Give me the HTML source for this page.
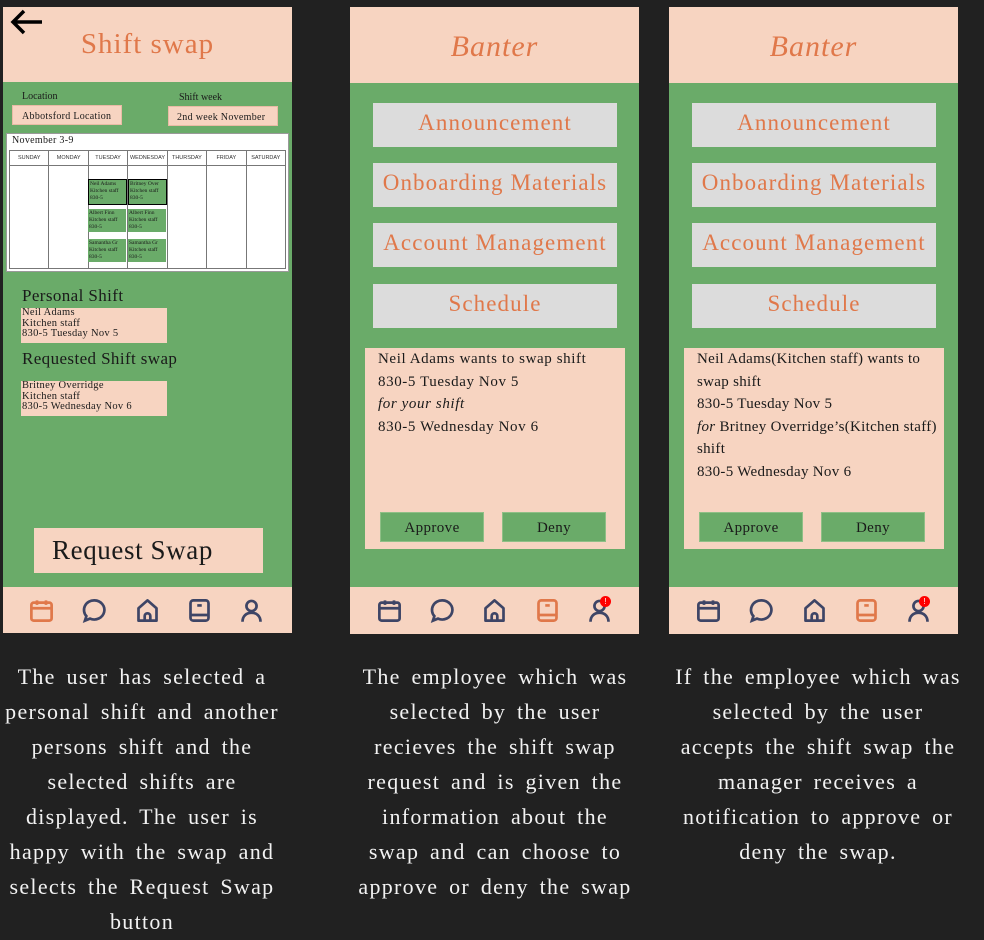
<!DOCTYPE html>
<html><head><meta charset="utf-8"><style>
*{margin:0;padding:0;box-sizing:border-box}
body{width:984px;height:940px;background:#212121;position:relative;overflow:hidden;font-family:"Liberation Serif","DejaVu Serif",serif;color:#1a1a1a}
.a{position:absolute}
.peach{background:#f7d4c1}
.green{background:#6aab69}
.or{color:#e0784a}
.gray{background:#dcdcdc;color:#e0784a;font-size:23px;text-align:center;line-height:40px;letter-spacing:1.1px;white-space:nowrap}
.cap{color:#f2f2f2;font-size:22px;text-align:center;line-height:35px;letter-spacing:1.3px;word-spacing:4px;white-space:nowrap}
.btn{background:#6aab69;border:1px solid #8fbf86;text-align:center;font-size:15px;line-height:30px;letter-spacing:.4px}
.ic{position:absolute;top:597px;width:27px;height:27px}
.box{font-size:15px;line-height:22.5px;letter-spacing:.6px;white-space:nowrap}
table{border-collapse:collapse;table-layout:fixed}
td{border:1px solid #777}
.sh{position:absolute;background:#6aab69;font-size:5.5px;line-height:7px;padding:1px}
</style></head><body>

<!-- LEFT -->
<div class="a peach" style="left:3px;top:7px;width:289px;height:75px"></div>
<svg class="a" style="left:8px;top:8px" width="38" height="30" viewBox="0 0 38 30"><path d="M34 14H5M16 3L5 14l11 11" stroke="#000" stroke-width="3.5" fill="none"/></svg>
<div class="a or" style="left:3px;top:28px;width:289px;text-align:center;font-size:29px;letter-spacing:1px">Shift swap</div>
<div class="a green" style="left:3px;top:82px;width:289px;height:505px"></div>
<div class="a" style="left:22px;top:91px;font-size:10px">Location</div>
<div class="a peach" style="left:12px;top:105px;width:110px;height:20px;font-size:10px;line-height:21px;padding-left:9px;border:1px solid #e9bba5;letter-spacing:.3px">Abbotsford Location</div>
<div class="a" style="left:179px;top:92px;font-size:10px">Shift week</div>
<div class="a peach" style="left:168px;top:106px;width:110px;height:20px;font-size:10px;line-height:21px;padding-left:8px;border:1px solid #e9bba5;letter-spacing:.3px">2nd week November</div>
<div class="a" style="left:6px;top:133px;width:283px;height:139px;background:#fff;border:1px solid #999"></div>
<div class="a" style="left:12px;top:135px;font-size:10px;letter-spacing:.3px">November 3-9</div>
<table class="a" style="left:9px;top:150px;width:277px;height:119px;font-family:'Liberation Sans',sans-serif;font-size:5.5px;color:#333">
<tr style="height:15px;text-align:center"><td>SUNDAY</td><td>MONDAY</td><td>TUESDAY</td><td>WEDNESDAY</td><td>THURSDAY</td><td>FRIDAY</td><td>SATURDAY</td></tr>
<tr><td></td><td></td><td></td><td></td><td></td><td></td><td></td></tr></table>
<div class="sh" style="left:88px;top:179px;width:39px;height:26px;border:1.5px solid #000">Neil Adams<br>Kitchen staff<br>830-5</div>
<div class="sh" style="left:128px;top:179px;width:39px;height:26px;border:1.5px solid #000">Britney Over<br>Kitchen staff<br>830-5</div>
<div class="sh" style="left:88px;top:209px;width:38px;height:23px">Albert Finn<br>Kitchen staff<br>830-5</div>
<div class="sh" style="left:128px;top:209px;width:38px;height:23px">Albert Finn<br>Kitchen staff<br>830-5</div>
<div class="sh" style="left:88px;top:239px;width:38px;height:23px">Samantha Gr<br>Kitchen staff<br>830-5</div>
<div class="sh" style="left:128px;top:239px;width:38px;height:23px">Samantha Gr<br>Kitchen staff<br>830-5</div>
<div class="a" style="left:22px;top:286px;font-size:17px;letter-spacing:.4px">Personal Shift</div>
<div class="a peach" style="left:21px;top:308px;width:146px;height:35px;font-size:10.5px;line-height:10.5px;padding-left:1px;letter-spacing:.3px">Neil Adams<br>Kitchen staff<br>830-5 Tuesday Nov 5</div>
<div class="a" style="left:22px;top:349px;font-size:17px;letter-spacing:.4px">Requested Shift swap</div>
<div class="a peach" style="left:21px;top:381px;width:146px;height:35px;font-size:10.5px;line-height:10.5px;padding-left:1px;letter-spacing:.3px">Britney Overridge<br>Kitchen staff<br>830-5 Wednesday Nov 6</div>
<div class="a peach" style="left:34px;top:528px;width:229px;height:45px;font-size:27px;line-height:45px;padding-left:18px;letter-spacing:.6px">Request Swap</div>
<div class="a peach" style="left:3px;top:587px;width:289px;height:46px"></div>

<!-- MIDDLE -->
<div class="a peach" style="left:350px;top:7px;width:289px;height:76px"></div>
<div class="a or" style="left:350px;top:30px;width:289px;text-align:center;font-size:30px;font-style:italic;letter-spacing:1px">Banter</div>
<div class="a green" style="left:350px;top:83px;width:289px;height:504px"></div>
<div class="a gray" style="left:373px;top:103px;width:244px;height:44px">Announcement</div>
<div class="a gray" style="left:373px;top:163px;width:244px;height:44px">Onboarding Materials</div>
<div class="a gray" style="left:373px;top:223px;width:244px;height:44px">Account Management</div>
<div class="a gray" style="left:373px;top:284px;width:244px;height:44px">Schedule</div>
<div class="a peach box" style="left:365px;top:348px;width:260px;height:201px;padding:0 0 0 13px">Neil Adams wants to swap shift<br>830-5 Tuesday Nov 5<br><i>for your shift</i><br>830-5 Wednesday Nov 6</div>
<div class="a btn" style="left:380px;top:512px;width:104px;height:30px">Approve</div>
<div class="a btn" style="left:502px;top:512px;width:104px;height:30px">Deny</div>
<div class="a peach" style="left:350px;top:587px;width:289px;height:47px"></div>

<!-- RIGHT -->
<div class="a peach" style="left:669px;top:7px;width:289px;height:76px"></div>
<div class="a or" style="left:669px;top:30px;width:289px;text-align:center;font-size:30px;font-style:italic;letter-spacing:1px">Banter</div>
<div class="a green" style="left:669px;top:83px;width:289px;height:504px"></div>
<div class="a gray" style="left:692px;top:103px;width:244px;height:44px">Announcement</div>
<div class="a gray" style="left:692px;top:163px;width:244px;height:44px">Onboarding Materials</div>
<div class="a gray" style="left:692px;top:223px;width:244px;height:44px">Account Management</div>
<div class="a gray" style="left:692px;top:284px;width:244px;height:44px">Schedule</div>
<div class="a peach box" style="left:684px;top:348px;width:260px;height:201px;padding:0 0 0 13px;letter-spacing:.3px">Neil Adams(Kitchen staff) wants to<br>swap shift<br>830-5 Tuesday Nov 5<br><i>for</i> Britney Overridge’s(Kitchen staff)<br>shift<br>830-5 Wednesday Nov 6</div>
<div class="a btn" style="left:699px;top:512px;width:104px;height:30px">Approve</div>
<div class="a btn" style="left:821px;top:512px;width:104px;height:30px">Deny</div>
<div class="a peach" style="left:669px;top:587px;width:289px;height:47px"></div>

<!-- icons -->
<svg width="0" height="0" style="position:absolute"><defs>
<g id="cal" fill="none" stroke-width="2.4"><rect x="3" y="5" width="18" height="16" rx="2"/><path d="M3 10h18M8 3v4M16 3v4"/><g stroke="none"><circle cx="8" cy="14" r="1.1"/><circle cx="12" cy="14" r="1.1"/><circle cx="16" cy="14" r="1.1"/><circle cx="8" cy="18" r="1.1"/><circle cx="12" cy="18" r="1.1"/><circle cx="16" cy="18" r="1.1"/></g></g>
<g id="chat" fill="none" stroke-width="2.4"><path d="M12 3a9 8.5 0 1 1-4 16.2L3.5 21l1.3-4A9 8.5 0 0 1 12 3z"/><g stroke="none"><circle cx="8" cy="11.5" r="1.1"/><circle cx="12" cy="11.5" r="1.1"/><circle cx="16" cy="11.5" r="1.1"/></g></g>
<g id="home" fill="none" stroke-width="2.4" stroke-linejoin="round"><path d="M4 21V10l8-7 8 7v11z"/><path d="M9.5 21v-4a2.5 2.5 0 0 1 5 0v4"/></g>
<g id="book" fill="none" stroke-width="2.4"><rect x="4" y="3" width="16" height="18" rx="2.5"/><path d="M4 16h16M10 7.5h4"/></g>
<g id="user" fill="none" stroke-width="2.4"><circle cx="12" cy="8" r="4.5"/><path d="M4 22c0-5 3.5-8 8-8s8 3 8 8"/></g>
</defs></svg>
<svg class="ic" style="left:28px" viewBox="0 0 24 24" stroke="#e0784a" fill="#e0784a"><use href="#cal"/></svg>
<svg class="ic" style="left:81px" viewBox="0 0 24 24" stroke="#3e4566" fill="#3e4566"><use href="#chat"/></svg>
<svg class="ic" style="left:134px" viewBox="0 0 24 24" stroke="#3e4566"><use href="#home"/></svg>
<svg class="ic" style="left:186px" viewBox="0 0 24 24" stroke="#3e4566"><use href="#book"/></svg>
<svg class="ic" style="left:238px" viewBox="0 0 24 24" stroke="#3e4566"><use href="#user"/></svg>

<svg class="ic" style="left:376px" viewBox="0 0 24 24" stroke="#3e4566" fill="#3e4566"><use href="#cal"/></svg>
<svg class="ic" style="left:429px" viewBox="0 0 24 24" stroke="#3e4566" fill="#3e4566"><use href="#chat"/></svg>
<svg class="ic" style="left:481px" viewBox="0 0 24 24" stroke="#3e4566"><use href="#home"/></svg>
<svg class="ic" style="left:534px" viewBox="0 0 24 24" stroke="#e0784a"><use href="#book"/></svg>
<svg class="ic" style="left:586px" viewBox="0 0 24 24" stroke="#3e4566"><use href="#user"/></svg>
<div class="a" style="left:600px;top:596px;width:11px;height:11px;border-radius:50%;background:#f00;color:#fff;font-size:8px;line-height:11px;text-align:center;font-family:'Liberation Sans'">!</div>

<svg class="ic" style="left:695px" viewBox="0 0 24 24" stroke="#3e4566" fill="#3e4566"><use href="#cal"/></svg>
<svg class="ic" style="left:748px" viewBox="0 0 24 24" stroke="#3e4566" fill="#3e4566"><use href="#chat"/></svg>
<svg class="ic" style="left:801px" viewBox="0 0 24 24" stroke="#3e4566"><use href="#home"/></svg>
<svg class="ic" style="left:853px" viewBox="0 0 24 24" stroke="#e0784a"><use href="#book"/></svg>
<svg class="ic" style="left:905px" viewBox="0 0 24 24" stroke="#3e4566"><use href="#user"/></svg>
<div class="a" style="left:919px;top:596px;width:11px;height:11px;border-radius:50%;background:#f00;color:#fff;font-size:8px;line-height:11px;text-align:center;font-family:'Liberation Sans'">!</div>

<!-- captions -->
<div class="a cap" style="left:-10px;top:659px;width:304px">The user has selected a<br>personal shift and another<br>persons shift and the<br>selected shifts are<br>displayed. The user is<br>happy with the swap and<br>selects the Request Swap<br>button</div>
<div class="a cap" style="left:342px;top:659px;width:306px">The employee which was<br>selected by the user<br>recieves the shift swap<br>request and is given the<br>information about the<br>swap and can choose to<br>approve or deny the swap</div>
<div class="a cap" style="left:665px;top:659px;width:306px">If the employee which was<br>selected by the user<br>accepts the shift swap the<br>manager receives a<br>notification to approve or<br>deny the swap.</div>
</body></html>
